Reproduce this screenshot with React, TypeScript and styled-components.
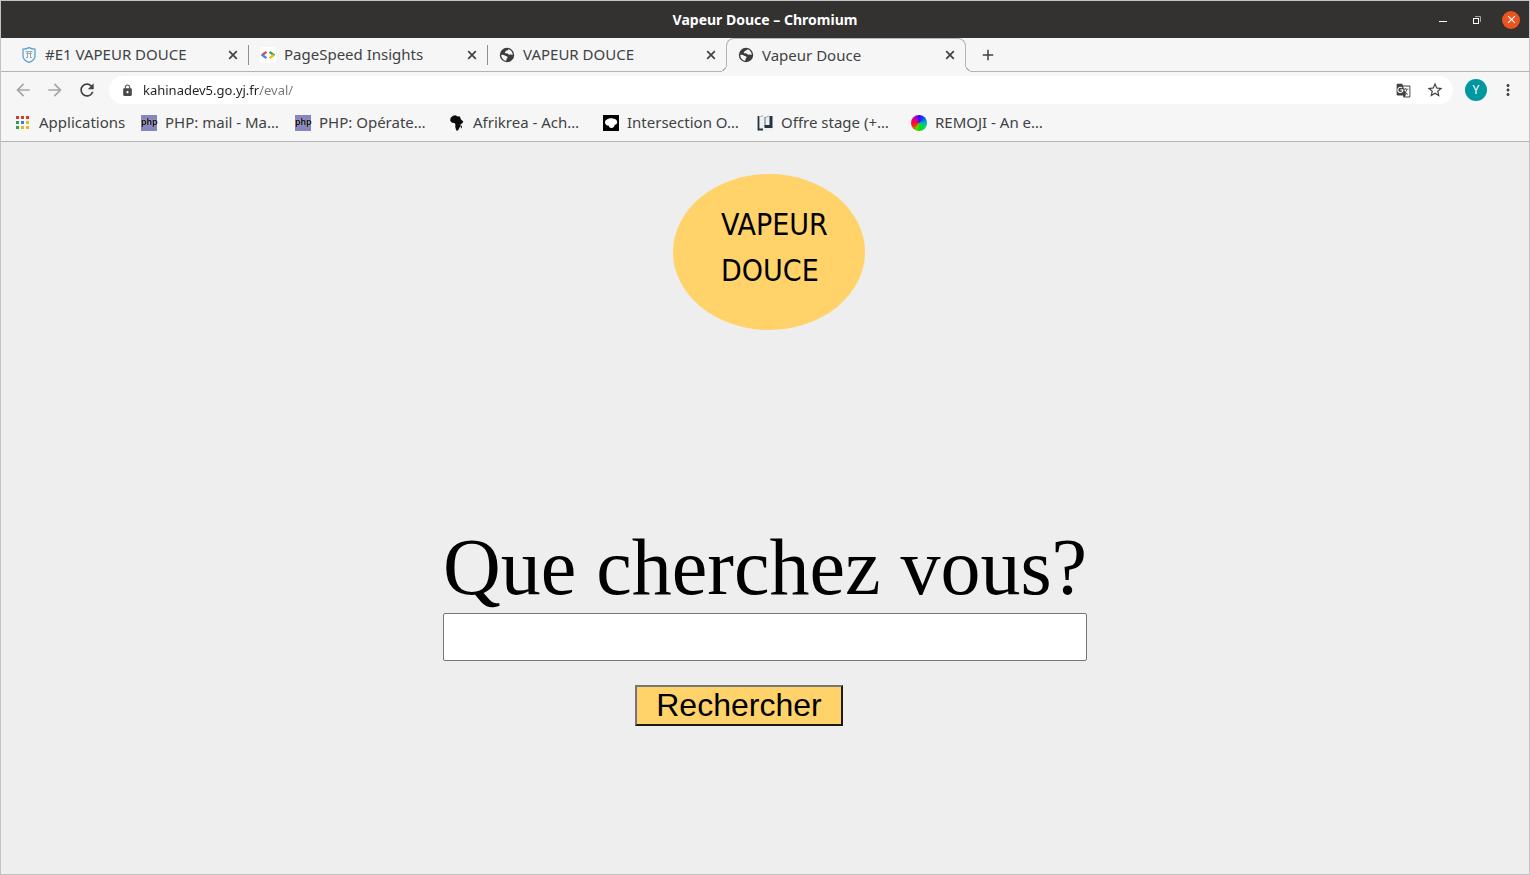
import React from "react";
import styled, { createGlobalStyle } from "styled-components";
import {
  MdAdd,
  MdArrowBack,
  MdArrowForward,
  MdClose,
  MdGTranslate,
  MdLock,
  MdMoreVert,
  MdRefresh,
  MdStarBorder,
} from "react-icons/md";

const chrome = "#f6f6f6";
const line = "#b4b4b4";
const ink = "#404244";

const GlobalStyle = createGlobalStyle`
  *, *::before, *::after { box-sizing: border-box; }
  body { margin: 0; font-family: "Noto Sans", "Open Sans", sans-serif; color: ${ink}; }
  button, input { font: inherit; color: inherit; margin: 0; }
`;

const Window = styled.div`
  display: flex;
  flex-direction: column;
  min-height: 100vh;
  border: 1px solid #c3c3c3;
  background: #eeeeee;
`;

const TitleBar = styled.header`
  display: grid;
  grid-template-columns: 1fr auto 1fr;
  align-items: center;
  height: 37px;
  padding: 0 9px;
  background: #343131;
  color: #ffffff;
`;

const WindowTitle = styled.span`
  grid-column: 2;
  font-size: 14px;
  font-weight: 700;
  line-height: 20px;
`;

const WindowButtons = styled.div`
  display: flex;
  justify-content: flex-end;
  align-items: center;
  gap: 16px;
`;

const IconButton = styled.button<{ $size?: number; $tone?: string; $fill?: string }>`
  display: flex;
  align-items: center;
  justify-content: center;
  flex: none;
  width: ${(p) => p.$size ?? 18}px;
  height: ${(p) => p.$size ?? 18}px;
  padding: 0;
  border: 0;
  border-radius: 50%;
  background: ${(p) => p.$fill ?? "transparent"};
  color: ${(p) => p.$tone ?? ink};
`;

const TabStrip = styled.nav`
  display: flex;
  height: 34px;
  padding-left: 8px;
  border-bottom: 1px solid ${line};
  background: ${chrome};
`;

const Tab = styled.div<{ $active?: boolean; $divided?: boolean }>`
  position: relative;
  display: flex;
  align-items: center;
  flex: 0 1 239px;
  min-width: 0;
  height: 33px;
  padding: 0 6px 0 12px;

  &::after {
    content: "";
    display: ${(p) => (p.$divided ? "block" : "none")};
    position: absolute;
    right: -1px;
    top: 7px;
    width: 1px;
    height: 20px;
    background: #8f8f8f;
  }

  ${(p) =>
    p.$active &&
    `
    flex-basis: 240px;
    height: 34px;
    padding: 0 6px 1px 11px;
    border: 1px solid ${line};
    border-bottom: 0;
    border-radius: 8px 8px 0 0;
    background: ${chrome};

    &::before, &::after {
      content: "";
      display: block;
      position: absolute;
      top: auto;
      bottom: 0;
      width: 8px;
      height: 8px;
    }
    &::before {
      left: -8px;
      background: radial-gradient(circle at 0 0, ${chrome} 7px, ${line} 7px, ${line} 8px, ${chrome} 8px);
    }
    &::after {
      right: -8px;
      background: radial-gradient(circle at 100% 0, ${chrome} 7px, ${line} 7px, ${line} 8px, ${chrome} 8px);
    }
  `}
`;

const TabLink = styled.a`
  display: flex;
  align-items: center;
  flex: 1;
  gap: 8px;
  min-width: 0;
  color: inherit;
  font-size: 15px;
  line-height: 19px;
  text-decoration: none;
  white-space: nowrap;
`;

const NewTab = styled(IconButton)`
  margin: 8px 0 0 13px;
`;

const Toolbar = styled.div`
  display: flex;
  align-items: center;
  height: 36px;
  padding: 0 12px;
  gap: 12px;
  background: ${chrome};
`;

const NavButtons = styled.div`
  display: flex;
  gap: 12px;
`;

const AddressBar = styled.label`
  display: flex;
  align-items: center;
  flex: 1;
  gap: 9px;
  min-width: 0;
  height: 28px;
  padding: 0 9px 0 12px;
  border-radius: 14px;
  background: #ffffff;
`;

const AddressInput = styled.input`
  flex: 1;
  min-width: 0;
  padding: 0;
  border: 0;
  outline: 0;
  font-size: 13px;
  line-height: 20px;
  background: linear-gradient(to right, #202124 117px, #777777 117px);
  background-clip: text;
  color: transparent;
`;

const AddressActions = styled.div`
  display: flex;
  gap: 14px;
`;

const Avatar = styled(IconButton)`
  font-size: 12px;
  line-height: 16px;
`;

const ToolbarEnd = styled.div`
  display: flex;
  align-items: center;
  gap: 12px;
`;

const Bookmarks = styled.nav`
  display: flex;
  align-items: center;
  height: 34px;
  padding: 0 14px 4px;
  border-bottom: 1px solid ${line};
  background: ${chrome};
`;

const Bookmark = styled.a<{ $width: number }>`
  display: flex;
  align-items: center;
  flex: 0 0 ${(p) => p.$width}px;
  gap: 8px;
  color: inherit;
  font-size: 15px;
  line-height: 19px;
  text-decoration: none;
  white-space: nowrap;
`;

const Favicon = styled.svg`
  flex: none;
  width: 16px;
  height: 16px;
`;

const PhpMark = styled.span`
  flex: none;
  width: 16px;
  height: 16px;
  background: #8686bf;
  color: #000000;
  font: 700 9px/15px "Liberation Sans", sans-serif;
  text-align: center;
  text-shadow: 0 0 1px #ffffff;
`;

const ColorWheel = styled.span`
  flex: none;
  width: 16px;
  height: 16px;
  border-radius: 50%;
  background: conic-gradient(#4a00e8, #0050ff 45deg, #00a8c8 80deg, #00d860 120deg, #00e010 170deg, #7ac800 205deg, #f03010 240deg, #ff0040 280deg, #c800b0 320deg, #4a00e8);
`;

const Page = styled.main`
  display: flex;
  flex-direction: column;
  align-items: center;
  flex: 1;
  padding-top: 32px;
  color: #000000;
`;

const LogoRow = styled.div`
  padding-left: 8px;
`;

const Logo = styled.a`
  display: flex;
  flex-direction: column;
  width: 192px;
  height: 156px;
  padding: 28px 0 0 48px;
  border-radius: 50%;
  background: #ffd369;
  color: #000000;
  font: 30px/46px "DejaVu Sans Condensed", "DejaVu Sans", sans-serif;
  text-decoration: none;
`;

const SearchForm = styled.form`
  display: flex;
  flex-direction: column;
  margin-top: 191px;
`;

const Question = styled.label`
  font-family: "Liberation Serif", serif;
  font-size: 80px;
  line-height: 92px;
  white-space: nowrap;
`;

const SearchInput = styled.input`
  width: 100%;
  height: 48px;
  padding: 0 8px;
  border: 1px solid #767676;
  border-radius: 2px;
  background: #ffffff;
  font: 32px "Liberation Sans", sans-serif;
`;

const SearchButton = styled.button`
  align-self: flex-start;
  width: 208px;
  height: 41px;
  margin: 24px 0 0 192px;
  padding: 0 0 1px;
  border: 2px solid;
  border-color: #767676 #1c1a16 #1c1a16 #767676;
  background: #ffd369;
  font: 32px/36px "Liberation Sans", sans-serif;
`;

const Shield = () => (
  <Favicon viewBox="0 0 16 16" fill="none" stroke="#5ba3d3">
    <path d="M2 2.2C4.5 2.2 6 1.7 8 .7c2 1 3.500 1.500 6 1.500v7c0 3-2.500 4.800-6 6.200-3.500-1.400-6-3.200-6-6.200z" strokeWidth="1.300" />
    <path d="M4.500 4.600h7M5.200 6.500h5.600M6.500 5v5.500H5M9.500 5v5.500H11" stroke="#9aa6ae" />
  </Favicon>
);

const PageSpeed = () => (
  <Favicon viewBox="0 0 16 16" fill="none" strokeWidth="2.200">
    <rect width="16" height="16" rx="2" fill="#ffffff" />
    <path d="M6.500 4.800 2.200 8" stroke="#ea4335" />
    <path d="M1.500 7.500 6.500 11.200" stroke="#4285f4" />
    <path d="M9.500 4.800 14.500 8.500" stroke="#34a853" />
    <path d="M13.800 8 9.500 11.200" stroke="#fbbc04" />
  </Favicon>
);

const Globe = () => (
  <Favicon viewBox="0 0 16 16">
    <circle cx="8" cy="8" r="7.200" fill="#3c3c3c" />
    <path d="M2.300 7.800c1.700-.2 3 .1 3.900 1 .8.700 2 .3 2.300 1.200.3 1-.8 1.300-1 2.200-.1.700-.2 1.300-.4 1.700C4.300 13.400 2.200 11 2.300 7.800z" fill={chrome} />
    <path d="M9.300 2.300c-.2.900-.9 1.200-1.700 1.300-.9.200-.8 1-1.400 1.400-.5.300-.5 1 .1 1.200 1 .3 2.300-.1 2.900.7.500.8 1.500.9 2.300.6.800-.2 1.500.1 2.200.6.100-2.800-1.500-5-4.400-5.800z" fill={chrome} />
  </Favicon>
);

const appColors = ["#d93a32", "#d93a32", "#d93a32", "#2f9e4f", "#3b7de0", "#eab52c", "#2f9e4f", "#eab52c", "#eab52c"];

const AppsGrid = () => (
  <Favicon viewBox="0 0 16 16">
    {appColors.map((c, i) => (
      <rect key={i} x={1 + (i % 3) * 5} y={1 + Math.floor(i / 3) * 5} width="3" height="3" fill={c} />
    ))}
  </Favicon>
);

const Africa = () => (
  <Favicon viewBox="0 0 16 16" fill="#0b0b0b">
    <path d="M4 .8 7 .2l.8 1 3 .4 1.200 2.800 2.300 2-.8 1.500-2 1.700.2 2-1.400 1.200-.8 2-1.800 1.100-.9-2-.6-2.300.3-1.800-1-1.700L3 7.800 1.200 5.800l.4-3z" />
    <path d="m12 11.300 1.100-1-.4 2.700-.9.600z" />
  </Favicon>
);

const Intersection = () => (
  <Favicon viewBox="0 0 16 16">
    <rect width="16" height="16" fill="#000000" />
    <path d="M2 7.500c0-1.600.6-2.500 1.800-2.800C5 3.300 8.500 2.800 10.500 3.700c2 .2 3.700 1.500 3.700 3.300 0 1.500-.8 2.600-2.400 2.800-.3 2-1.500 3.200-3.300 3.200-1.500 0-2.500-.8-2.700-2.200C3.500 10.600 2 9.500 2 7.500z" fill="#ffffff" />
  </Favicon>
);

const Offer = () => (
  <Favicon viewBox="0 0 16 16" fill="none">
    <rect width="16" height="16" fill="#eef2f3" />
    <path d="M1.500 1v13.500H6" stroke="#27343f" strokeWidth="1.800" />
    <path d="M3.500 1.500 6 .8M8.500 2.500 12 1" stroke="#9aa8b0" />
    <path d="M8 2v9h6" stroke="#5b6a75" />
    <path d="M7.500 11.500h6.500V1" stroke="#27343f" strokeWidth="3" />
  </Favicon>
);

const RestoreIcon = () => (
  <svg width="10" height="10" viewBox="0 0 10 10" fill="none" stroke="#ffffff">
    <rect x="1.500" y="3.500" width="5" height="5" />
    <path d="M3 1.500h5.500V7" stroke="#a5a3a3" />
  </svg>
);

const tabs = [
  { title: "#E1 VAPEUR DOUCE", icon: <Shield />, divided: true },
  { title: "PageSpeed Insights", icon: <PageSpeed />, divided: true },
  { title: "VAPEUR DOUCE", icon: <Globe /> },
  { title: "Vapeur Douce", icon: <Globe />, active: true },
];

const bookmarks = [
  { title: "Applications", icon: <AppsGrid />, width: 126 },
  { title: "PHP: mail - Ma…", icon: <PhpMark>php</PhpMark>, width: 154 },
  { title: "PHP: Opérate…", icon: <PhpMark>php</PhpMark>, width: 154 },
  { title: "Afrikrea - Ach…", icon: <Africa />, width: 154 },
  { title: "Intersection O…", icon: <Intersection />, width: 154 },
  { title: "Offre stage (+…", icon: <Offer />, width: 154 },
  { title: "REMOJI - An e…", icon: <ColorWheel />, width: 154 },
];

export default function App() {
  return (
    <Window>
      <GlobalStyle />
      <TitleBar>
        <WindowTitle>Vapeur Douce – Chromium</WindowTitle>
        <WindowButtons>
          <IconButton aria-label="Réduire" $tone="#ffffff">
            <svg width="10" height="10" viewBox="0 0 10 10">
              <path d="M1 6.500h8" stroke="currentColor" />
            </svg>
          </IconButton>
          <IconButton aria-label="Restaurer" $tone="#ffffff">
            <RestoreIcon />
          </IconButton>
          <IconButton aria-label="Fermer" $tone="#ffffff" $fill="#e95420">
            <MdClose size={13} />
          </IconButton>
        </WindowButtons>
      </TitleBar>

      <TabStrip aria-label="Onglets">
        {tabs.map((tab, i) => (
          <Tab key={i} $active={tab.active} $divided={tab.divided}>
            <TabLink href="#">
              {tab.icon}
              {tab.title}
            </TabLink>
            <IconButton aria-label="Fermer l'onglet">
              <svg width="10" height="10" viewBox="0 0 10 10" stroke="currentColor" strokeWidth="1.700">
                <path d="m1.200 1.200 7.600 7.600M8.800 1.200 1.200 8.800" />
              </svg>
            </IconButton>
          </Tab>
        ))}
        <NewTab aria-label="Nouvel onglet">
          <MdAdd size={20} />
        </NewTab>
      </TabStrip>

      <Toolbar>
        <NavButtons>
          <IconButton aria-label="Précédent" $size={20} $tone="#a6a6a6">
            <MdArrowBack size={20} />
          </IconButton>
          <IconButton aria-label="Suivant" $size={20} $tone="#a6a6a6">
            <MdArrowForward size={20} />
          </IconButton>
          <IconButton aria-label="Actualiser" $size={20}>
            <MdRefresh size={20} />
          </IconButton>
        </NavButtons>
        <AddressBar>
          <MdLock size={13} color="#4a4a4a" />
          <AddressInput aria-label="Adresse" defaultValue="kahinadev5.go.yj.fr/eval/" spellCheck={false} />
          <AddressActions>
            <IconButton aria-label="Traduire">
              <MdGTranslate size={15} />
            </IconButton>
            <IconButton aria-label="Ajouter aux favoris">
              <MdStarBorder size={18} />
            </IconButton>
          </AddressActions>
        </AddressBar>
        <ToolbarEnd>
          <Avatar aria-label="Profil" $size={22} $fill="#0097a0" $tone="#ffffff">
            Y
          </Avatar>
          <IconButton aria-label="Menu">
            <MdMoreVert size={20} />
          </IconButton>
        </ToolbarEnd>
      </Toolbar>

      <Bookmarks aria-label="Favoris">
        {bookmarks.map((b, i) => (
          <Bookmark key={i} href="#" $width={b.width}>
            {b.icon}
            {b.title}
          </Bookmark>
        ))}
      </Bookmarks>

      <Page>
        <LogoRow>
          <Logo href="#">
            <span>VAPEUR</span>
            <span>DOUCE</span>
          </Logo>
        </LogoRow>
        <SearchForm onSubmit={(e) => e.preventDefault()}>
          <Question htmlFor="search">Que cherchez vous?</Question>
          <SearchInput id="search" type="text" />
          <SearchButton type="submit">Rechercher</SearchButton>
        </SearchForm>
      </Page>
    </Window>
  );
}
